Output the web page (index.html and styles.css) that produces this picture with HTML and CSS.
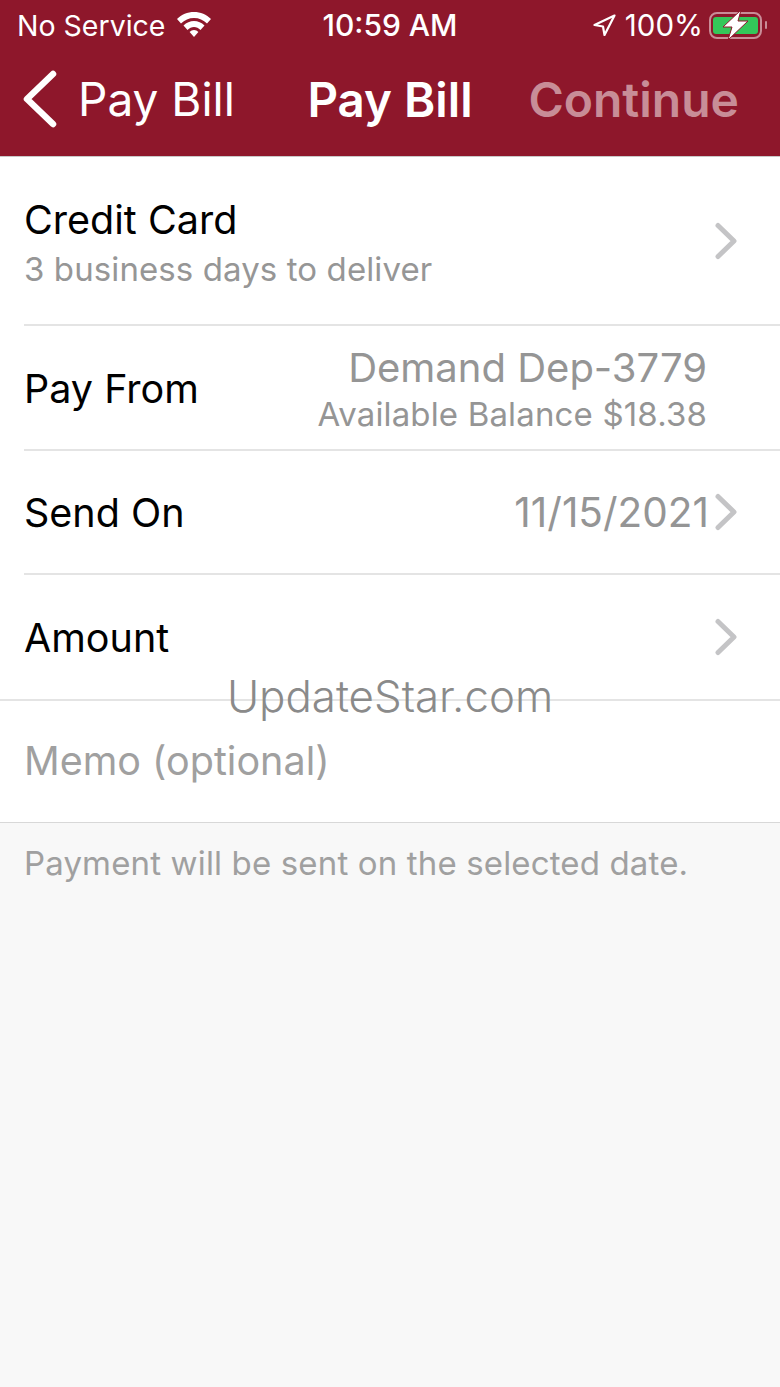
FILE: index.html
```html
<!DOCTYPE html>
<html lang="en">
<head>
    <meta charset="UTF-8">
    <meta name="viewport" content="width=device-width, initial-scale=1.0">
    <title>Pay Bill</title>
    <link rel="stylesheet" href="styles.css">
</head>
<body>
    <header class="top">
        <div class="status">
            <div class="status-left">
                <span>No Service</span>
                <svg class="wifi" width="36" height="27" viewBox="0 0 36 27">
                    <path d="M18 1C11.500 1 5.500 3.500 1 8L5 12.500C8.500 9 13 7 18 7S27.500 9 31 12.500L35 8C30.500 3.500 24.500 1 18 1Z" fill="#fff"/>
                    <path d="M18 10C14 10 10.500 11.500 7.500 14.500L11.500 19C13.500 17 15.500 16 18 16S22.500 17 24.500 19L28.500 14.500C25.500 11.500 22 10 18 10Z" fill="#fff"/>
                    <path d="M18 19C16.300 19 14.800 19.700 13.600 21L18 26L22.400 21C21.200 19.700 19.700 19 18 19Z" fill="#fff"/>
                </svg>
            </div>
            <div class="status-time">10:59 AM</div>
            <div class="status-right">
                <svg class="arrow" width="24" height="24" viewBox="0 0 24 24">
                    <path d="M22.500 2.500L2.500 12L11 13.500L12.500 22Z" fill="none" stroke="#fff" stroke-width="2.200" stroke-linejoin="round"/>
                </svg>
                <span>100%</span>
                <svg class="battery" width="58" height="30" viewBox="0 0 58 30">
                    <rect x="1" y="3" width="51" height="25" rx="7" fill="none" stroke="#c98c97" stroke-width="2"/>
                    <rect x="4" y="7" width="45" height="17" rx="3" fill="#34c759"/>
                    <rect x="56" y="11" width="2" height="8" rx="1" fill="#c98c97"/>
                    <path d="M32 0L14 17H23L19 30L39 11H29Z" fill="#fff" stroke="#8e172b" stroke-width="1"/>
                </svg>
            </div>
        </div>
        <nav class="nav">
            <div class="nav-back">
                <svg width="38" height="60" viewBox="0 0 38 60">
                    <path d="M31 5L5 30L31 55" fill="none" stroke="#fff" stroke-width="6.500" stroke-linecap="round" stroke-linejoin="round"/>
                </svg>
                <span>Pay Bill</span>
            </div>
            <div class="nav-title">Pay Bill</div>
            <div class="nav-action">Continue</div>
        </nav>
    </header>

    <main class="list">
        <div class="row row-card">
            <div>
                <div class="label">Credit Card</div>
                <div class="sub">3 business days to deliver</div>
            </div>
            <svg class="chev chev-card" width="26" height="38" viewBox="0 0 26 38">
                <path d="M6 3.500L22 19L6 34.500" fill="none" stroke="#c4c4c6" stroke-width="5" stroke-linecap="round" stroke-linejoin="round"/>
            </svg>
        </div>
        <div class="row row-from">
            <div class="label">Pay From</div>
            <div class="from-right">
                <div class="value">Demand Dep-3779</div>
                <div class="balance">Available Balance $18.38</div>
            </div>
        </div>
        <div class="row row-date">
            <div class="label">Send On</div>
            <div class="date-right">
                <div class="value date">11/15/2021</div>
                <svg class="chev" width="26" height="38" viewBox="0 0 26 38">
                    <path d="M6 3.500L22 19L6 34.500" fill="none" stroke="#c4c4c6" stroke-width="5" stroke-linecap="round" stroke-linejoin="round"/>
                </svg>
            </div>
        </div>
        <div class="row row-amount">
            <div class="label">Amount</div>
            <svg class="chev" width="26" height="38" viewBox="0 0 26 38">
                <path d="M6 3.500L22 19L6 34.500" fill="none" stroke="#c4c4c6" stroke-width="5" stroke-linecap="round" stroke-linejoin="round"/>
            </svg>
        </div>
        <div class="row row-memo">
            <div class="label memo">Memo (optional)</div>
        </div>
    </main>
    <p class="note">Payment will be sent on the selected date.</p>

    <div class="watermark">UpdateStar.com</div>
</body>
</html>
```

FILE: styles.css
```css
body {
    margin: 0;
    height: 1387px;
    background-color: #f8f8f8;
    font-family: Inter, "Liberation Sans", sans-serif;
    color: #000;
    overflow: hidden;
    position: relative;
}

.top {
    height: 156px;
    background-color: #8e172b;
    color: #fff;
    border-bottom: 1px solid #c8c8c8;
}

.status {
    height: 50px;
    padding: 0 13px 0 17px;
    display: flex;
    align-items: center;
    justify-content: space-between;
    font-size: 28.5px;
    position: relative;
}

.status-left,
.status-right {
    display: flex;
    align-items: center;
}

.status-left {
    gap: 11px;
}

.wifi {
    margin-top: -2px;
}

.status-right {
    gap: 6px;
    font-size: 29.5px;
}

.arrow {
    margin-right: 3px;
}

.status-time {
    position: absolute;
    left: 0;
    right: 0;
    text-align: center;
    font-size: 30px;
    font-weight: 500;
}

.nav {
    height: 106px;
    box-sizing: border-box;
    padding: 0 41px 8px 22px;
    display: flex;
    align-items: center;
    justify-content: space-between;
    font-size: 46px;
    position: relative;
}

.nav-back {
    display: flex;
    align-items: center;
    gap: 18px;
}

.nav-title {
    position: absolute;
    left: 0;
    right: 0;
    text-align: center;
    font-size: 47.5px;
    font-weight: 600;
}

.nav-action {
    font-size: 48px;
    font-weight: 600;
    color: #c88d97;
}

.list {
    background-color: #fff;
    border-bottom: 1px solid #d8d8d8;
}

.row {
    margin-left: 24px;
    padding-right: 42px;
    display: flex;
    align-items: center;
    justify-content: space-between;
    border-bottom: 2px solid #e4e4e4;
    box-sizing: border-box;
}

.row-card {
    height: 169px;
    padding-top: 4px;
}

.chev-card {
    margin-top: -4px;
}

.row-from {
    height: 125px;
    padding-right: 73px;
}

.row-date {
    height: 124px;
}

.row-amount {
    height: 126px;
    margin-left: 0;
    padding-left: 24px;
}

.row-memo {
    height: 121px;
    border-bottom: 0;
}

.label {
    font-size: 39.5px;
}

.row-from .label,
.row-date .label,
.row-amount .label {
    margin-top: 2px;
}

.sub {
    margin-top: 5px;
    font-size: 33px;
    letter-spacing: 0.1px;
    color: #969696;
}

.memo {
    margin-top: -2px;
    color: #a0a0a0;
}

.from-right {
    padding-top: 1px;
    text-align: right;
}

.value {
    font-size: 40px;
    color: #959595;
}

.date {
    font-size: 40.5px;
}

.balance {
    margin-top: 2px;
    font-size: 33px;
    letter-spacing: 0.15px;
    color: #959595;
}

.date-right {
    display: flex;
    align-items: center;
    gap: 3px;
}

.note {
    margin: 20px 0 0 24px;
    font-size: 33px;
    letter-spacing: 0.15px;
    color: #a0a0a0;
}

.watermark {
    position: absolute;
    left: 0;
    right: 0;
    top: 670px;
    text-align: center;
    font-size: 43.8px;
    font-weight: 300;
    color: #8a8a8a;
}
```
